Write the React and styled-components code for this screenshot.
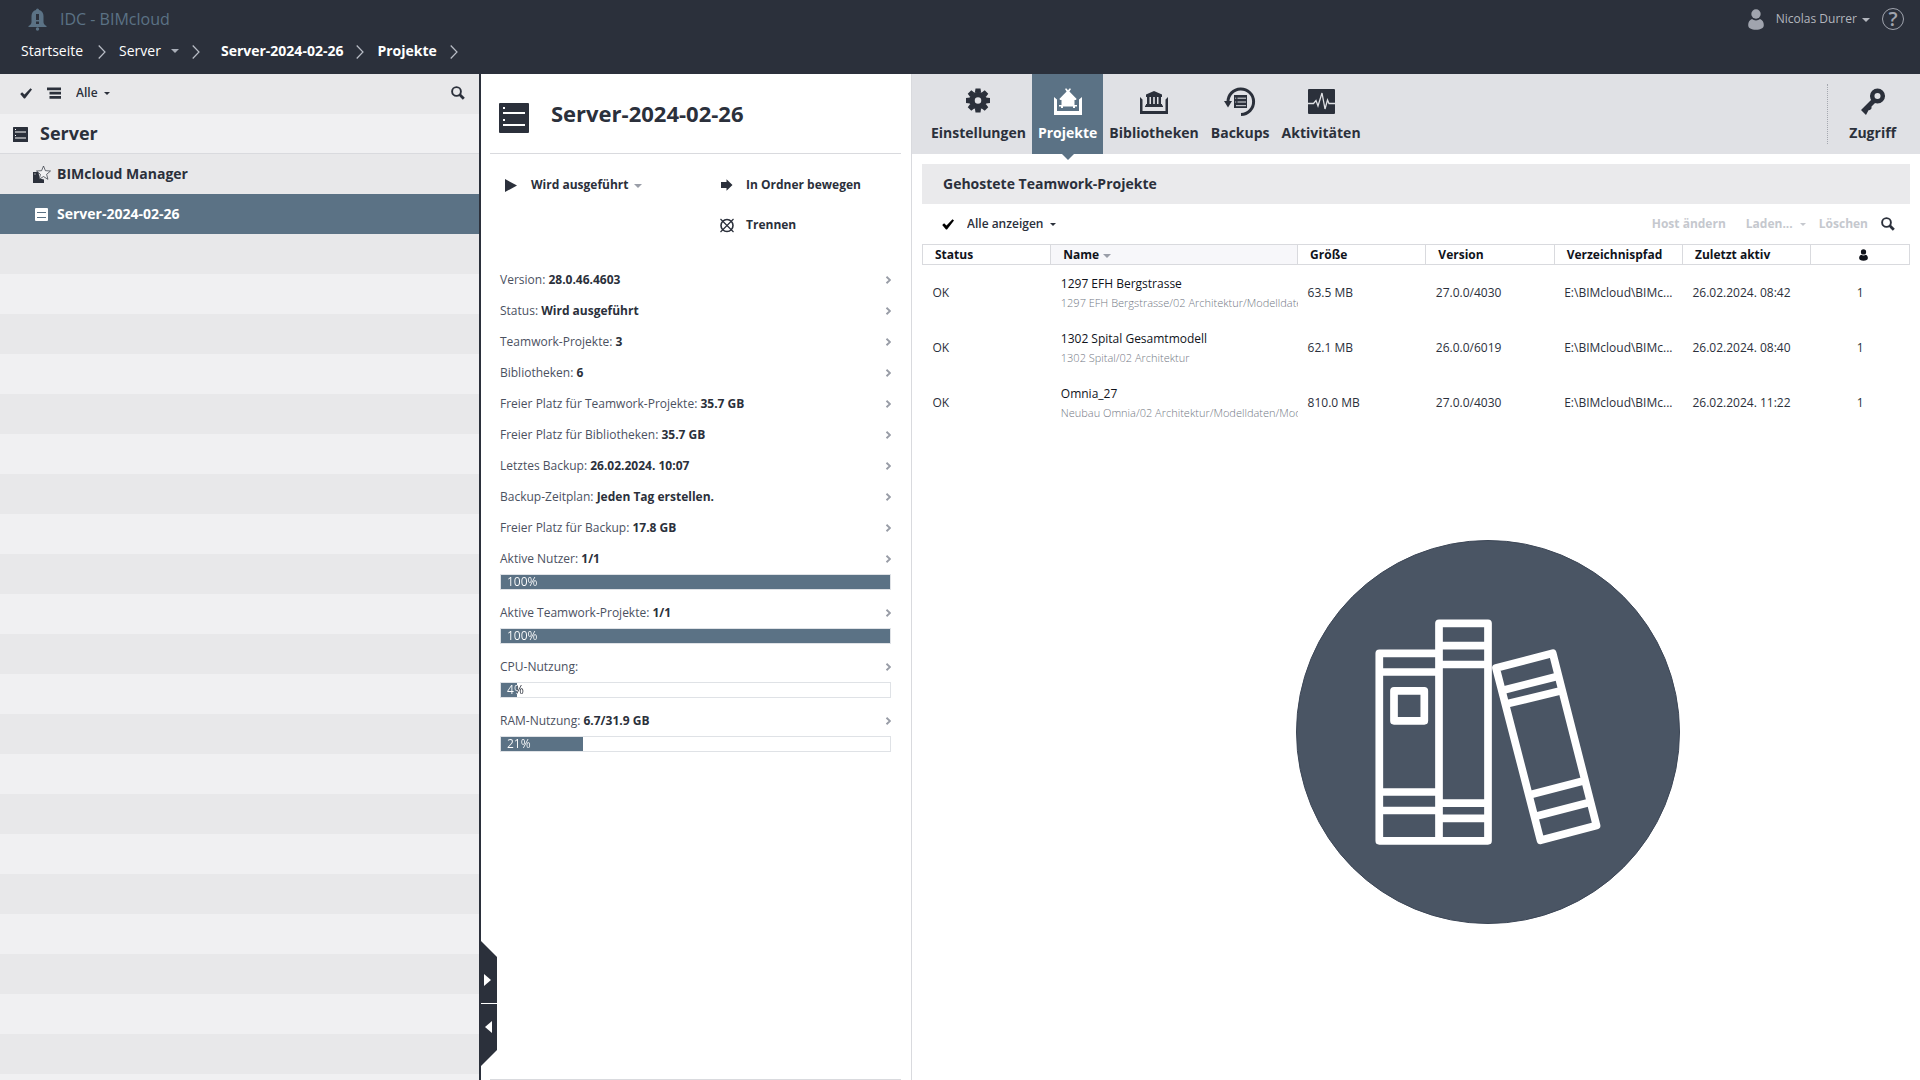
import styled, { createGlobalStyle } from 'styled-components';

const dark = '#2b303b';
const blue = '#5b7285';
const line = '#d9dade';

const servers = [
    { name: 'BIMcloud Manager', icon: 'manager' },
    { name: 'Server-2024-02-26', icon: 'server', selected: true },
];

const infos = [
    { label: 'Version', value: '28.0.46.4603' },
    { label: 'Status', value: 'Wird ausgeführt' },
    { label: 'Teamwork-Projekte', value: '3' },
    { label: 'Bibliotheken', value: '6' },
    { label: 'Freier Platz für Teamwork-Projekte', value: '35.7 GB' },
    { label: 'Freier Platz für Bibliotheken', value: '35.7 GB' },
    { label: 'Letztes Backup', value: '26.02.2024. 10:07' },
    { label: 'Backup-Zeitplan', value: 'Jeden Tag erstellen.' },
    { label: 'Freier Platz für Backup', value: '17.8 GB' },
    { label: 'Aktive Nutzer', value: '1/1', percent: 100 },
    { label: 'Aktive Teamwork-Projekte', value: '1/1', percent: 100 },
    { label: 'CPU-Nutzung', value: '', percent: 4 },
    { label: 'RAM-Nutzung', value: '6.7/31.9 GB', percent: 21 },
];

const tabs = [
    { name: 'Einstellungen', Icon: GearIcon },
    { name: 'Projekte', Icon: ProjectIcon, active: true },
    { name: 'Bibliotheken', Icon: LibraryIcon },
    { name: 'Backups', Icon: BackupIcon },
    { name: 'Aktivitäten', Icon: ActivityIcon },
];

const projects = [
    {
        name: '1297 EFH Bergstrasse',
        path: '1297 EFH Bergstrasse/02 Architektur/Modelldaten',
        size: '63.5 MB',
        version: '27.0.0/4030',
        active: '26.02.2024. 08:42',
    },
    {
        name: '1302 Spital Gesamtmodell',
        path: '1302 Spital/02 Architektur',
        size: '62.1 MB',
        version: '26.0.0/6019',
        active: '26.02.2024. 08:40',
    },
    {
        name: 'Omnia_27',
        path: 'Neubau Omnia/02 Architektur/Modelldaten/Modelle',
        size: '810.0 MB',
        version: '27.0.0/4030',
        active: '26.02.2024. 11:22',
    },
];

export default function App() {
    return (
        <Page>
            <GlobalStyle />
            <Header />
            <Main>
                <Sidebar />
                <ServerPanel />
                <Content />
            </Main>
        </Page>
    );
}

function Header() {
    return (
        <HeaderBar>
            <HeaderTop>
                <Brand>
                    <BellIcon />
                    IDC - BIMcloud
                </Brand>
                <UserArea>
                    <PersonIcon width={16} height={21} />
                    <UserButton aria-haspopup="menu">
                        Nicolas Durrer <Caret />
                    </UserButton>
                    <HelpButton aria-label="Hilfe">?</HelpButton>
                </UserArea>
            </HeaderTop>
            <Breadcrumbs aria-label="Pfad">
                <Crumb href="#start">Startseite</Crumb>
                <CrumbArrow />
                <Crumb href="#server">Server</Crumb>
                <CrumbMenu aria-label="Server wählen" aria-haspopup="menu">
                    <Caret $color="#a9aeb8" />
                </CrumbMenu>
                <CrumbArrow />
                <Crumb href="#server-2024" $bold $wide>Server-2024-02-26</Crumb>
                <CrumbArrow />
                <Crumb href="#projekte" $bold>Projekte</Crumb>
                <CrumbArrow />
            </Breadcrumbs>
        </HeaderBar>
    );
}

function Sidebar() {
    return (
        <SidebarBox>
            <SidebarTools>
                <IconButton aria-label="Auswählen"><CheckIcon /></IconButton>
                <IconButton aria-label="Baumansicht"><TreeIcon /></IconButton>
                <FilterLabel>
                    <FilterSelect aria-label="Filter">
                        <option>Alle</option>
                    </FilterSelect>
                    <Caret $size={3} />
                </FilterLabel>
                <Spacer />
                <IconButton aria-label="Suchen"><SearchIcon /></IconButton>
            </SidebarTools>
            <SidebarTitle>
                <ServerIcon size={15} />
                Server
            </SidebarTitle>
            <ServerList>
                {servers.map((server) => (
                    <li key={server.name}>
                        <ServerLink href="#server" $selected={server.selected}>
                            {server.icon === 'manager' ? <ManagerIcon /> : <SmallServerIcon />}
                            {server.name}
                        </ServerLink>
                    </li>
                ))}
            </ServerList>
            <Stripes />
        </SidebarBox>
    );
}

function ServerPanel() {
    return (
        <Panel>
            <PanelHeader>
                <ServerIcon size={30} />
                <PanelTitle>Server-2024-02-26</PanelTitle>
            </PanelHeader>
            <Actions>
                <ActionButton aria-haspopup="menu">
                    <PlayIcon />
                    <span>Wird ausgeführt <Caret $color="#9a9ea8" /></span>
                </ActionButton>
                <ActionButton>
                    <MoveIcon />
                    In Ordner bewegen
                </ActionButton>
                <ActionButton $second>
                    <DetachIcon />
                    Trennen
                </ActionButton>
            </Actions>
            <InfoList>
                {infos.map((info) => <Info key={info.label} info={info} />)}
            </InfoList>
            <PanelEnd />
            <Handles>
                <Handle aria-label="Ausklappen" $top><HandleArrow viewBox="0 0 7 12"><path d="M0 0l7 6-7 6z" /></HandleArrow></Handle>
                <Handle aria-label="Einklappen"><HandleArrow viewBox="0 0 7 12"><path d="M7 0v12L0 6z" /></HandleArrow></Handle>
            </Handles>
        </Panel>
    );
}

function Info({ info }) {
    const { label, value, percent } = info;
    return (
        <InfoItem $bar={percent !== undefined}>
            <InfoButton>
                <span>{label}: <b>{value}</b></span>
                <ArrowIcon />
            </InfoButton>
            {percent !== undefined && (
                <Bar role="progressbar" aria-label={label} aria-valuenow={percent} style={{ '--percent': percent + '%' }}>
                    <BarText>{percent}%</BarText>
                </Bar>
            )}
        </InfoItem>
    );
}

function Content() {
    return (
        <ContentBox>
            <Tabs>
                {tabs.map(({ name, Icon, active }) => (
                    <Tab key={name} $active={active}>
                        <Icon />
                        {name}
                    </Tab>
                ))}
                <Spacer />
                <AccessBox>
                    <Tab>
                        <KeyIcon />
                        Zugriff
                    </Tab>
                </AccessBox>
            </Tabs>
            <Section>
                <SectionTitle>Gehostete Teamwork-Projekte</SectionTitle>
                <SectionTools>
                    <IconButton aria-label="Auswählen"><CheckIcon color="#000" /></IconButton>
                    <FilterLabel>
                        <FilterSelect aria-label="Projekte filtern">
                            <option>Alle anzeigen</option>
                        </FilterSelect>
                        <Caret $size={3} />
                    </FilterLabel>
                    <Spacer />
                    <ToolButton disabled $apart>Host ändern</ToolButton>
                    <ToolButton disabled>Laden... <Caret $size={3} $gap={4} /></ToolButton>
                    <ToolButton disabled>Löschen</ToolButton>
                    <IconButton aria-label="Suchen"><SearchIcon /></IconButton>
                </SectionTools>
                <ProjectTable />
            </Section>
            <Illustration>
                <BooksImage />
            </Illustration>
        </ContentBox>
    );
}

function ProjectTable() {
    return (
        <Table>
            <colgroup>
                <Col $width={13} />
                <Col $width={25} />
                <Col $width={13} />
                <Col $width={13} />
                <Col $width={13} />
                <Col $width={13} />
                <Col $width={10} />
            </colgroup>
            <thead>
                <tr>
                    <Th>Status</Th>
                    <Th $sorted>Name <Caret $gap={1} $color="#9a9ea8" /></Th>
                    <Th>Größe</Th>
                    <Th>Version</Th>
                    <Th>Verzeichnispfad</Th>
                    <Th>Zuletzt aktiv</Th>
                    <Th $center aria-label="Nutzer"><PersonIcon width={9} height={12} /></Th>
                </tr>
            </thead>
            <tbody>
                {projects.map((project) => (
                    <tr key={project.name}>
                        <Td>OK</Td>
                        <Td $full>
                            <ProjectName>{project.name}</ProjectName>
                            <ProjectPath>{project.path}</ProjectPath>
                        </Td>
                        <Td>{project.size}</Td>
                        <Td>{project.version}</Td>
                        <Td>E:\BIMcloud\BIMc...</Td>
                        <Td>{project.active}</Td>
                        <Td $center>1</Td>
                    </tr>
                ))}
            </tbody>
        </Table>
    );
}

/* icons */

function BellIcon() {
    return (
        <svg width="19" height="23" viewBox="0 0 19 23" fill={blue}>
            <path d="M8 2a1.5 1.5 0 0 1 3 0c3 .8 4.500 3 4.500 6v6c0 1.800 1 3 3 4v1H.5v-1c2-1 3-2.200 3-4V8C3.500 5 5 2.800 8 2z" />
            <circle cx="9.500" cy="21" r="1.700" />
            <path d="M8 6h3v6H8zM8 13.500h3v2.500H8z" fill={dark} />
        </svg>
    );
}

function PersonIcon({ width, height }) {
    return (
        <svg width={width} height={height} viewBox="0 0 16 21" fill="currentColor">
            <circle cx="8" cy="5" r="4.700" />
            <path d="M4 10c1 .9 2.400 1.400 4 1.400s3-.5 4-1.400c2.500 1 3.800 3 3.800 6 0 3.300-3.200 4.700-7.800 4.700S.2 19.300.2 16c0-3 1.300-5 3.800-6z" />
        </svg>
    );
}

function CrumbArrow() {
    return (
        <ArrowSvg width="8" height="14" viewBox="0 0 8 14">
            <path d="M.7.5l6.300 6.500-6.300 6.500" fill="none" stroke="#b9bdc6" strokeWidth="1.200" />
        </ArrowSvg>
    );
}

function ArrowIcon() {
    return (
        <svg width="6" height="8" viewBox="0 0 6 8">
            <path d="M1.500 .8L5 4 1.500 7.200" fill="none" stroke="#989ca6" strokeWidth="1.900" />
        </svg>
    );
}

function CheckIcon({ color = dark }) {
    return (
        <svg width="12" height="11" viewBox="0 0 12 11">
            <path d="M.2 6l1.900-1.700 2.400 2.200L10.500.3 12 1.500 5 10.500H4z" fill={color} />
        </svg>
    );
}

function TreeIcon() {
    return (
        <svg width="14" height="12" viewBox="0 0 14 12" fill={dark}>
            <path d="M0 .5h14v2.800H0zM2.500 4.700H14v2.800H2.500zM2.500 9H14v2.800H2.500z" />
        </svg>
    );
}

function SearchIcon() {
    return (
        <svg width="14" height="14" viewBox="0 0 14 14" fill="none" stroke={dark}>
            <circle cx="5.500" cy="5.500" r="4.400" strokeWidth="1.900" />
            <path d="M8.600 8.600l4.200 4.200" strokeWidth="2.800" />
        </svg>
    );
}

function ServerIcon({ size }) {
    return (
        <svg width={size} height={size} viewBox="0 0 30 30">
            <rect width="30" height="30" rx="1" fill={dark} />
            <path d="M4 10h22M4 22h22" stroke="#fff" strokeWidth="2" />
            <path d="M4 5h2M4 17h2" stroke="#fff" strokeWidth="2" />
        </svg>
    );
}

function SmallServerIcon() {
    return (
        <SmallSvg width="18" height="18" viewBox="0 0 18 18">
            <rect x="2" y="3" width="13" height="13" rx="1" fill="#fff" />
            <path d="M4 7.500h9M4 12.500h9" stroke={blue} />
        </SmallSvg>
    );
}

function ManagerIcon() {
    return (
        <SmallSvg width="18" height="19" viewBox="0 0 18 19">
            <path d="M0 7h5.500l1 6.500 4.500 1v3.500H0z" fill={dark} />
            <path d="M1.500 8.500h1v1h-1z" fill="#fff" />
            <path d="M10.500 1l1.900 4.700 5.100.3-3.900 3.300 1.300 5-4.400-2.800-4.300 2.800 1.200-5L3.500 6l5.100-.3z" fill="#f1f1f3" stroke={dark} strokeWidth=".7" />
        </SmallSvg>
    );
}

function PlayIcon() {
    return (
        <svg width="15" height="13" viewBox="0 0 15 13" fill={dark}>
            <path d="M0 0l12 6.500L0 13z" />
        </svg>
    );
}

function MoveIcon() {
    return (
        <svg width="15" height="13" viewBox="0 0 15 13" fill={dark}>
            <path d="M1 3h5.500V.3l6 5.700-6 5.700V9H1z" />
        </svg>
    );
}

function DetachIcon() {
    return (
        <svg width="15" height="15" viewBox="0 0 15 15" fill="none" stroke={dark}>
            <circle cx="7" cy="7.500" r="6" strokeWidth="1.600" />
            <path d="M.5 1l13 13M13.500 1L.5 14" strokeWidth="1.200" />
        </svg>
    );
}

function GearIcon() {
    return (
        <svg width="32" height="32" viewBox="0 0 32 32" fill="currentColor">
            {[0, 45, 90, 135].map((angle) => (
                <path key={angle} d="M13.500 4.500h5l.6 4h-6.200zM13.500 28.500h5l.6-4h-6.200z" transform={`rotate(${angle} 16 16.500)`} />
            ))}
            <circle cx="16" cy="16.500" r="6" fill="none" stroke="currentColor" strokeWidth="5.500" />
        </svg>
    );
}

function ProjectIcon() {
    return (
        <svg width="32" height="32" viewBox="0 0 32 32" fill="currentColor">
            <path d="M2 13l3 2.500V27h22V15.500l3-2.500v18H2z" />
            <path d="M13 5l1.200-.7L16 6.200l1.800-1.900L19 5l-1.600 2.400 7.300 7.600-1 1h-1.200v5H25v1.500h-2V24h-2v-1.500H11V24H9v-1.500H7V21h2.500v-5H8.300l-1-1 7.300-7.600z" />
        </svg>
    );
}

function LibraryIcon() {
    return (
        <svg width="32" height="32" viewBox="0 0 32 32" fill="currentColor">
            <path d="M2 13l2.500 2.500V27h23V15.500L30 13v17H2z" />
            <path d="M8 10.500l8-3.500 8 3.500V13H8zM9 13h2.500v7H9zM13 13h2.200v7H13zM16.800 13H19v7h-2.200zM20.500 13H23v7h-2.500zM8 20h16v1.500h1V23H7v-1.500h1z" />
        </svg>
    );
}

function BackupIcon() {
    return (
        <svg width="32" height="32" viewBox="0 0 32 32" fill="none">
            <path d="M4 18A12.800 12.800 0 1 1 17 30.500" stroke="currentColor" strokeWidth="3" />
            <path d="M0 17h8l-4 6.500z" fill="currentColor" />
            <rect x="10" y="11" width="13" height="13" fill="currentColor" />
            <path d="M13.500 14.200H22M13.500 18H22M12 21.700h10M11.200 14.200h1M11.200 18h1" stroke="#e0e1e5" />
        </svg>
    );
}

function ActivityIcon() {
    return (
        <svg width="32" height="32" viewBox="0 0 32 32" fill="none">
            <rect x="3" y="5" width="27" height="25" rx="1" fill="currentColor" />
            <path d="M3 19.500h5.500l2.500-3 2 5.500 4-13 3 16 2.500-9 1.500 3.500h6" stroke="#e0e1e5" strokeWidth="1.300" />
        </svg>
    );
}

function KeyIcon() {
    return (
        <svg width="32" height="32" viewBox="0 0 32 32" fill="none">
            <circle cx="20.500" cy="12" r="5.300" stroke="currentColor" strokeWidth="4.500" />
            <path d="M16 14l3.500 3.500-5 5v2L13 26l-1.500.3L9 31l-5-5z" fill="currentColor" />
        </svg>
    );
}

function BooksImage() {
    return (
        <svg width="384" height="384" viewBox="0 0 384 384" fill="none" stroke="#fff" strokeWidth="7.700" strokeLinejoin="round">
            <circle cx="192" cy="192" r="191.500" fill="#4a5564" stroke="#3c4656" strokeWidth="1" />
            <path d="M83.300 113.300H143v187.500H83.300zM143 83.300h49v217.500h-49z" />
            <path d="M83 132h60M83 252h60M83 270.500h60M143 105.700h49M143 124.500h49M143 263.200h49M143 278.300h49" />
            <path d="M98 150.800h30.300v30H98z" />
            <path d="M200 128l56.700-14.700L300.500 285.500l-56 14.700z" />
            <path d="M206 150.500l55-14M210 164l54-13M233 255l56-14.500M239 276.500l56-14.500" />
        </svg>
    );
}

/* styles */

const GlobalStyle = createGlobalStyle`
    * {
        box-sizing: border-box;
    }

    body {
        margin: 0;
        background: #fff;
        color: ${dark};
        font-family: 'Open Sans', 'Noto Sans', sans-serif;
        font-size: 12px;
        line-height: 20px;
    }

    button, select {
        margin: 0;
        padding: 0;
        border: 0;
        background: none;
        color: inherit;
        font: inherit;
        cursor: pointer;
    }

    a {
        color: inherit;
        text-decoration: none;
    }

    svg {
        display: block;
        flex: none;
    }
`;

const Page = styled.div`
    display: flex;
    flex-direction: column;
    min-height: 100vh;
`;

const Main = styled.main`
    display: grid;
    grid-template-columns: 481fr 431fr 1008fr;
    flex: 1;
`;

const Spacer = styled.div`
    flex: 1;
`;

const Caret = styled.span`
    display: inline-block;
    margin-left: ${(props) => props.$gap || 2}px;
    vertical-align: middle;
    border: ${(props) => props.$size || 4}px solid transparent;
    border-top-color: ${(props) => props.$color || 'currentColor'};
    border-bottom: 0;
`;

const HeaderBar = styled.header`
    height: 74px;
    background: ${dark};
    color: #fff;
`;

const HeaderTop = styled.div`
    display: flex;
    align-items: center;
    justify-content: space-between;
    height: 38px;
    padding: 0 16px 0 28px;
`;

const Brand = styled.div`
    display: flex;
    align-items: center;
    gap: 13px;
    color: ${blue};
    font-size: 16px;
`;

const UserArea = styled.div`
    display: flex;
    align-items: center;
    gap: 12px;
    color: #a0a4ae;
`;

const UserButton = styled.button`
    color: #b3b6be;
`;

const HelpButton = styled.button`
    width: 22px;
    height: 22px;
    border: 1px solid #a0a4ae;
    border-radius: 50%;
    font-size: 20px;
    font-weight: 600;
    line-height: 20px;
`;

const Breadcrumbs = styled.nav`
    display: flex;
    align-items: center;
    height: 26px;
    padding-left: 21px;
    font-size: 14px;
`;

const Crumb = styled.a`
    margin-left: ${(props) => (props.$wide ? 8 : 0)}px;
    padding-right: ${(props) => (props.$bold ? 0 : 2)}px;
    font-weight: ${(props) => (props.$bold ? 700 : 400)};
`;

const CrumbMenu = styled.button`
    display: flex;
    padding-left: 6px;
`;

const ArrowSvg = styled.svg`
    margin: 2px 13px 0;
`;

const SidebarBox = styled.aside`
    display: flex;
    flex-direction: column;
    border-right: 2px solid ${dark};
    background: #e8e8ea;
`;

const SidebarTools = styled.div`
    display: flex;
    align-items: center;
    gap: 15px;
    height: 40px;
    padding: 0 14px 2px 20px;
`;

const IconButton = styled.button`
    display: flex;
`;

const FilterLabel = styled.label`
    display: flex;
    align-items: center;
    gap: 4px;
`;

const FilterSelect = styled.select`
    appearance: none;
    font-weight: 600;
`;

const SidebarTitle = styled.h2`
    display: flex;
    align-items: center;
    gap: 12px;
    height: 40px;
    margin: 0;
    padding: 0 0 2px 13px;
    border-bottom: 1px solid ${line};
    background: #f0f0f2;
    font-size: 18px;
    font-weight: 700;

    svg {
        margin-top: 4px;
    }
`;

const ServerList = styled.ul`
    margin: 0;
    padding: 0;
    list-style: none;
`;

const ServerLink = styled.a`
    display: flex;
    align-items: center;
    gap: 6px;
    height: 40px;
    padding-left: 33px;
    background: ${(props) => (props.$selected ? blue : 'none')};
    color: ${(props) => (props.$selected ? '#fff' : dark)};
    font-size: 14px;
    font-weight: 700;
`;

const SmallSvg = styled.svg`
    width: 18px;
`;

const Stripes = styled.div`
    flex: 1;
    background: repeating-linear-gradient(#e8e8ea 0 40px, #f0f0f2 40px 80px);
`;

const Panel = styled.section`
    position: relative;
    display: flex;
    flex-direction: column;
    border-right: 1px solid ${line};
`;

const PanelHeader = styled.div`
    display: flex;
    align-items: center;
    gap: 22px;
    height: 80px;
    margin: 0 10px 0 9px;
    padding: 8px 9px 0;
    border-bottom: 1px solid ${line};
`;

const PanelTitle = styled.h1`
    margin: 0;
    padding-bottom: 10px;
    font-size: 22px;
    font-weight: 700;
    line-height: 30px;
`;

const Actions = styled.div`
    display: grid;
    grid-template-columns: 1fr 1fr;
    grid-auto-rows: 40px;
    margin-bottom: 19px;
    padding-top: 11px;
`;

const ActionButton = styled.button`
    display: flex;
    align-items: center;
    gap: 11px;
    grid-column: ${(props) => (props.$second ? 2 : 'auto')};
    padding-left: 24px;
    font-weight: 700;
`;

const InfoList = styled.ul`
    margin: 0;
    padding: 0 20px 0 19px;
    list-style: none;
`;

const InfoItem = styled.li`
    padding-bottom: ${(props) => (props.$bar ? 7 : 0)}px;
`;

const InfoButton = styled.button`
    display: flex;
    align-items: center;
    justify-content: space-between;
    width: 100%;
    height: 31px;
    color: #4b515f;
    text-align: left;

    b {
        color: ${dark};
    }
`;

const Bar = styled.div`
    height: 16px;
    border: 1px solid #dfe2e6;
    background: linear-gradient(to right, ${blue} var(--percent), #fff var(--percent));
    line-height: 14px;
`;

/* white over the filled part, dark over the rest */
const BarText = styled.span`
    display: block;
    padding-left: 6px;
    background: linear-gradient(to right, #fff var(--percent), ${dark} var(--percent));
    background-clip: text;
    color: #fff;
    -webkit-text-fill-color: transparent;
`;

const PanelEnd = styled.div`
    margin: auto 10px 0 9px;
    border-bottom: 1px solid ${line};
`;

const Handles = styled.div`
    position: absolute;
    bottom: 14px;
    left: 0;
    display: grid;
    gap: 1px;
    width: 16px;
`;

const Handle = styled.button`
    display: flex;
    align-items: center;
    justify-content: center;
    height: 62px;
    padding: ${(props) => (props.$top ? '16px 3px 0 0' : '0 2px 16px 0')};
    background: ${dark};
    clip-path: ${(props) => (props.$top
        ? 'polygon(0 0, 100% 16px, 100% 100%, 0 100%)'
        : 'polygon(0 0, 100% 0, 100% 46px, 0 100%)')};
`;

const HandleArrow = styled.svg`
    width: 7px;
    height: 12px;
    fill: #fff;
`;

const ContentBox = styled.section`
    min-width: 0;
`;

const Tabs = styled.nav`
    display: flex;
    height: 80px;
    padding-left: 13px;
    background: #e0e1e5;
`;

const Tab = styled.button`
    position: relative;
    display: flex;
    flex-direction: column;
    align-items: center;
    gap: 7px;
    padding: 10px 6px 0;
    background: ${(props) => (props.$active ? blue : 'none')};
    color: ${(props) => (props.$active ? '#fff' : dark)};
    font-size: 14px;
    font-weight: 700;

    &::after {
        content: '';
        display: ${(props) => (props.$active ? 'block' : 'none')};
        position: absolute;
        top: 100%;
        border: 6px solid transparent;
        border-top-color: ${blue};
        border-bottom: 0;
    }
`;

const AccessBox = styled.div`
    display: flex;
    padding-right: 18px;

    &::before {
        content: '';
        margin: 10px 15px 10px 0;
        border-left: 1px dotted #a5a8b0;
    }
`;

const Section = styled.div`
    padding: 10px 10px 0;
`;

const SectionTitle = styled.h2`
    margin: 0;
    padding: 10px 21px;
    background: #eaeaec;
    font-size: 14px;
    font-weight: 700;
    line-height: 20px;
`;

const SectionTools = styled.div`
    display: flex;
    align-items: center;
    gap: 13px;
    height: 40px;
    padding: 0 15px 0 20px;
`;

const ToolButton = styled.button`
    margin-right: ${(props) => (props.$apart ? 7 : 0)}px;
    color: #c5c8ce;
    font-weight: 700;
`;

const Table = styled.table`
    width: 100%;
    table-layout: fixed;
    border-collapse: collapse;
`;

const Col = styled.col`
    width: ${(props) => props.$width}%;
`;

const Th = styled.th`
    height: 20px;
    padding: ${(props) => (props.$center ? '0 0 0 6px' : '0 12px')};
    border: 1px solid ${line};
    background: ${(props) => (props.$sorted ? '#f7f7fa' : '#fff')};
    color: #10131b;
    font-weight: 700;
    line-height: 19px;
    text-align: left;

    svg {
        margin: 0 auto;
    }
`;

const Td = styled.td`
    height: 55px;
    padding: ${(props) => (props.$full ? '0 0 0 10px' : '2px 10px 0')};
    overflow: hidden;
    text-align: ${(props) => (props.$center ? 'center' : 'left')};
    white-space: nowrap;
`;

const ProjectName = styled.div`
    color: #10131b;
`;

const ProjectPath = styled.div`
    overflow: hidden;
    color: #747985;
    font-size: 11px;
    font-weight: 300;
    line-height: 17px;
`;

const Illustration = styled.div`
    display: flex;
    justify-content: flex-end;
    padding: 110px 240px 0 0;
`;
